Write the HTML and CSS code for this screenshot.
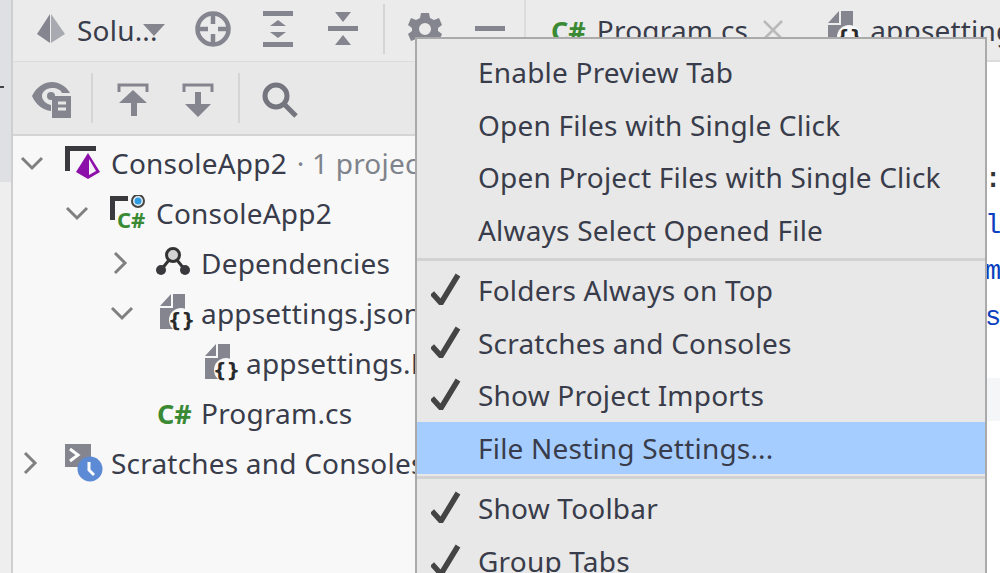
FILE: index.html
```html
<!DOCTYPE html>
<html lang="en">
<head>
<meta charset="utf-8">
<title>Solution explorer menu</title>
<link rel="stylesheet" href="styles.css">
</head>
<body>
<svg class="defs" width="0" height="0" aria-hidden="true">
  <defs>
    <symbol id="json" viewBox="0 0 40 40">
      <path class="fill-g" d="M0 13 11 1v12z"/>
      <path class="fill-g" d="M13 1h12v16H13z"/>
      <path class="fill-g" d="M0 15h25v21H0z"/>
      <circle class="fill-bg" cx="21" cy="27" r="12"/>
      <text class="brace" x="21.5" y="34" text-anchor="middle">{}</text>
    </symbol>
    <symbol id="check" viewBox="0 0 30 32">
      <path class="check-line" d="M1 20 10 30 27 2"/>
    </symbol>
  </defs>
</svg>
<div class="app">
  <div class="strip"><div class="strip-top"><span class="strip-dash"></span></div></div>
  <section class="panel">
    <div class="toolbar first">
      <div class="solution">
        <svg class="ico-pyr" width="30" height="32" viewBox="0 0 30 32"><path class="fill-lg" d="M15 1 29 21 15 30z"/><path class="fill-g" d="M14 1 1 21 14 30z"/></svg>
        <span class="sol-label">Solu...</span>
        <svg class="ico-drop" width="22" height="12" viewBox="0 0 22 12"><path class="fill-g" d="M0 0h22L11 12z"/></svg>
      </div>
      <div class="btn"><svg width="36" height="36" viewBox="0 0 36 36"><circle class="line-g" cx="18" cy="18" r="15.5"/><path class="line-g" d="M18 3v10M18 23v10M3 18h10M23 18h10"/></svg></div>
      <div class="btn"><svg width="32" height="36" viewBox="0 0 32 36"><path class="fill-g" d="M1 0h30v5H1zM1 31h30v5H1zM16 9l8 6H8zM8 21h16l-8 6z"/></svg></div>
      <div class="btn"><svg width="32" height="36" viewBox="0 0 32 36"><path class="fill-g" d="M1 15h30v5H1zM8 1h16l-8 10zM16 24l8 10H8z"/></svg></div>
      <span class="vsep"></span>
      <div class="btn"><svg width="34" height="34" viewBox="0 0 34 34"><path class="fill-g" fill-rule="evenodd" d="M13 1h8l1 5 4 2 5-2 3 7-4 3v3l4 3-3 7-5-2-4 2-1 5h-8l-1-5-4-2-5 2-3-7 4-3v-3l-4-3 3-7 5 2 4-2zM17 11a6 6 0 1 0 0 12 6 6 0 0 0 0-12z"/></svg></div>
      <div class="btn"><svg width="32" height="6" viewBox="0 0 32 6"><path class="fill-g" d="M1 0h30v5H1z"/></svg></div>
    </div>
    <div class="toolbar second">
      <div class="btn eye"><svg width="40" height="38" viewBox="0 0 40 38"><path class="fill-g" fill-rule="evenodd" d="M0 15C5 5 13 1 20 1c7 0 14 4 18 11h-8c-1-3-5-5-10-5-6 0-10 4-10 8s4 8 9 9v6C11 29 4 24 0 15z"/><circle class="fill-g" cx="19" cy="15" r="4"/><path class="fill-g" d="M20 15h19v22H20z"/><path class="stroke-lt" d="M26 22h8M26 28h8"/></svg></div>
      <span class="vsep"></span>
      <div class="btn"><svg width="32" height="34" viewBox="0 0 32 34"><path class="line-th" d="M2 9V2h28v7"/><path class="fill-g" d="M16 7 30 20H20v13h-6V20H2z"/></svg></div>
      <div class="btn"><svg width="32" height="34" viewBox="0 0 32 34"><path class="line-th" d="M2 9V2h28v7"/><path class="fill-g" d="M13 9h6v12h10L16 34 3 21h10z"/></svg></div>
      <span class="vsep"></span>
      <div class="btn"><svg width="36" height="36" viewBox="0 0 36 36"><circle class="line-s" cx="14" cy="14" r="11"/><path class="line-h" d="M22 22 34 34"/></svg></div>
    </div>
    <div class="tree">
      <div class="row d0">
        <svg class="chev" width="24" height="14" viewBox="0 0 24 14"><path class="line-c" d="M2 2l10 10L22 2"/></svg>
        <svg class="node" width="46" height="36" viewBox="0 0 46 36"><path class="fill-d" d="M0 1h31v5H5v20H0z"/><path class="fill-p" d="M23 8 35 27 23 34 11 27z"/><path class="fill-w" d="M24 14 31 26 24 30z"/></svg>
        <span class="name">ConsoleApp2</span><span class="muted">· 1 project</span>
      </div>
      <div class="row d1">
        <svg class="chev" width="24" height="14" viewBox="0 0 24 14"><path class="line-c" d="M2 2l10 10L22 2"/></svg>
        <svg class="node" width="46" height="36" viewBox="0 0 46 36"><path class="fill-d" d="M0 1h18v5H5v19H0z"/><circle class="proj-ring" cx="28" cy="6" r="6"/><circle class="proj-dot" cx="28" cy="6" r="3.5"/><text class="cs-small" x="7" y="33">C#</text></svg>
        <span class="name">ConsoleApp2</span>
      </div>
      <div class="row d2">
        <svg class="chev" width="24" height="24" viewBox="0 0 24 24"><path class="line-c" d="M5 2l10 10L5 22"/></svg>
        <svg class="node" width="46" height="36" viewBox="0 0 46 36"><path class="line-dep" d="M6 25 18 10 30 25"/><circle class="dep-top" cx="18" cy="10" r="6.5"/><circle class="fill-d" cx="6" cy="25" r="5"/><circle class="fill-d" cx="30" cy="25" r="5"/></svg>
        <span class="name">Dependencies</span>
      </div>
      <div class="row d2">
        <svg class="chev" width="24" height="14" viewBox="0 0 24 14"><path class="line-c" d="M2 2l10 10L22 2"/></svg>
        <span class="node doc"><svg width="40" height="40"><use href="#json"/></svg></span>
        <span class="name">appsettings.json</span>
      </div>
      <div class="row d3">
        <span class="chev-gap"></span>
        <span class="node doc"><svg width="40" height="40"><use href="#json"/></svg></span>
        <span class="name">appsettings.Development.json</span>
      </div>
      <div class="row d2">
        <span class="chev-gap"></span>
        <span class="node"><span class="cs">C#</span></span>
        <span class="name">Program.cs</span>
      </div>
      <div class="row d0">
        <svg class="chev" width="24" height="24" viewBox="0 0 24 24"><path class="line-c" d="M5 2l10 10L5 22"/></svg>
        <svg class="node" width="46" height="40" viewBox="0 0 46 40"><path class="fill-g" d="M0 1h26v23H0z"/><path class="stroke-white" d="M5 6l8 6-8 6"/><circle class="clock" cx="25" cy="26" r="12.5"/><path class="stroke-white" d="M24 19v8l5 5"/></svg>
        <span class="name">Scratches and Consoles</span>
      </div>
    </div>
  </section>
  <section class="editor">
    <div class="tabs">
      <div class="tab"><span class="cs">C#</span><span class="tab-name">Program.cs</span><svg class="tab-x" width="20" height="20" viewBox="0 0 20 20"><path class="line-x" d="M1 1l18 18M19 1 1 19"/></svg></div>
      <div class="tab"><span class="doc tab-doc"><svg width="40" height="40"><use href="#json"/></svg></span><span class="tab-name">appsettings.json</span></div>
    </div>
    <div class="code">
      <div class="code-line dark">:</div>
      <div class="code-line">l</div>
      <div class="code-line">m</div>
      <div class="code-line">s</div>
      <div class="code-line current"></div>
    </div>
  </section>
</div>
<div class="menu">
  <div class="item">Enable Preview Tab</div>
  <div class="item">Open Files with Single Click</div>
  <div class="item">Open Project Files with Single Click</div>
  <div class="item">Always Select Opened File</div>
  <div class="msep"></div>
  <div class="item"><svg class="tick" width="30" height="32"><use href="#check"/></svg>Folders Always on Top</div>
  <div class="item"><svg class="tick" width="30" height="32"><use href="#check"/></svg>Scratches and Consoles</div>
  <div class="item"><svg class="tick" width="30" height="32"><use href="#check"/></svg>Show Project Imports</div>
  <div class="item active">File Nesting Settings...</div>
  <div class="msep"></div>
  <div class="item"><svg class="tick" width="30" height="32"><use href="#check"/></svg>Show Toolbar</div>
  <div class="item"><svg class="tick" width="30" height="32"><use href="#check"/></svg>Group Tabs</div>
</div>
</body>
</html>
```
FILE: styles.css
```css
* { box-sizing: border-box; }
html, body { margin: 0; height: 100%; overflow: hidden; }
body { font-family: "Noto Sans", "Open Sans", sans-serif; font-size: 28px; letter-spacing: 0.2px; color: #393c4a; background: #fff; }
.defs { position: absolute; }
.app { display: flex; height: 573px; overflow: hidden; }

.strip { width: 13px; flex: none; background: #eeeeee; border-right: 2px solid #cfcfcf; }
.strip-top { height: 182px; background: #dfe0e4; padding-top: 86px; }
.strip-dash { display: block; width: 4px; height: 2px; background: #444; }

.panel { width: 511px; flex: none; display: flex; flex-direction: column; background: #f8f8f8; }
.toolbar { display: flex; align-items: center; background: #ebebeb; flex: none; }
.toolbar.first { height: 62px; padding-bottom: 4px; border-bottom: 1px solid #dcdcdc; }
.toolbar.second { height: 74px; padding-left: 7px; padding-top: 4px; background: #e8e8e8; border-bottom: 2px solid #d4d4d4; }
.btn { width: 65px; height: 50px; flex: none; display: flex; align-items: center; justify-content: center; }
.btn.eye { width: 63px; }
.vsep { width: 2px; height: 50px; margin: 0 7.5px; background: #d5d5d5; flex: none; }
.toolbar.second .vsep { margin-bottom: 4px; }
.solution { width: 167.5px; flex: none; display: flex; align-items: center; padding-left: 23px; }
.sol-label { margin-left: 11px; margin-top: 3px; white-space: nowrap; }
.ico-drop { margin-left: -15px; margin-top: 3px; flex: none; }

.tree { flex: 1; padding-top: 2px; overflow: hidden; }
.row { height: 50px; display: flex; align-items: center; white-space: nowrap; }
.d0 { padding-left: 7px; }
.d1 { padding-left: 52px; }
.d2 { padding-left: 97px; }
.d3 { padding-left: 142px; }
.chev { width: 45px; flex: none; padding-right: 21px; overflow: visible; }
.chev-gap { width: 45px; flex: none; }
.node { width: 46px; flex: none; display: block; }
.doc { display: flex; padding-left: 5px; }
.name { color: #393c4a; }
.muted { color: #7f838b; margin-left: 10px; }
.cs { font-weight: 700; color: #3a8a34; font-size: 27px; display: block; padding-left: 2px; letter-spacing: 0; }

.editor { flex: 1; min-width: 0; background: #fff; }
.tabs { height: 62px; display: flex; align-items: center; padding-left: 23px; background: #ebebeb; border-left: 2px solid #dcdcdc; border-bottom: 2px solid #dcdcdc; white-space: nowrap; }
.tab { display: flex; align-items: center; flex: none; }
.tab-name { margin-left: 11px; }
.tab-x { margin: 0 45px 0 15px; }
.tab-doc { padding: 0; margin-right: -9px; }
.code { padding-top: 95px; padding-left: 461px; }
.code-line { height: 46px; font-family: "Liberation Mono", monospace; font-size: 27px; line-height: 46px; letter-spacing: 0; color: #0b3fc0; }
.code-line.dark { color: #333; font-weight: 700; }
.code-line.current { height: 43px; margin-top: 37px; margin-left: -20px; background: #f4f6f8; }

.menu { position: absolute; left: 415px; top: 37px; width: 572px; height: 560px; padding-top: 7px; background: #e8e8e8; border: 2px solid #aaaaaa; }
.item { position: relative; height: 52.5px; display: flex; align-items: center; padding-left: 61px; white-space: nowrap; }
.item.active { background: #a6cdff; }
.msep { height: 3px; margin: 2px 0 3px; background: #d2d2d2; }
.tick { position: absolute; left: 14px; top: 9px; }

.fill-g { fill: #85858f; }
.fill-lg { fill: #a9a9b1; }
.fill-d { fill: #3a3a3e; }
.fill-p { fill: #8b0fa8; }
.fill-w { fill: #f4eef6; }
.fill-bg { fill: #f8f8f8; }
.line-g { fill: none; stroke: #85858f; stroke-width: 4.5; }
.line-th { fill: none; stroke: #85858f; stroke-width: 3; }
.line-s { fill: none; stroke: #75757f; stroke-width: 5; }
.line-h { fill: none; stroke: #75757f; stroke-width: 5; }
.line-c { fill: none; stroke: #808080; stroke-width: 3; }
.line-x { fill: none; stroke: #b9b9b9; stroke-width: 2.5; }
.line-dep { fill: none; stroke: #333; stroke-width: 3; }
.dep-top { fill: #d3d3d3; stroke: #333; stroke-width: 3; }
.proj-ring { fill: #e8eef2; stroke: #444; stroke-width: 2; }
.proj-dot { fill: #2f9be0; }
.cs-small { font-family: "Noto Sans", sans-serif; font-weight: 700; font-size: 22px; letter-spacing: 0; fill: #3a8a34; }
.brace { font-family: "DejaVu Sans", sans-serif; font-weight: 700; font-size: 19px; letter-spacing: 0; fill: #2b2b2b; }
.stroke-lt { fill: none; stroke: #e8e8e8; stroke-width: 3; }
.stroke-white { fill: none; stroke: #fff; stroke-width: 3; }
.clock { fill: #5d8ad4; }
.check-line { fill: none; stroke: #444; stroke-width: 5.5; stroke-linejoin: miter; }
```
